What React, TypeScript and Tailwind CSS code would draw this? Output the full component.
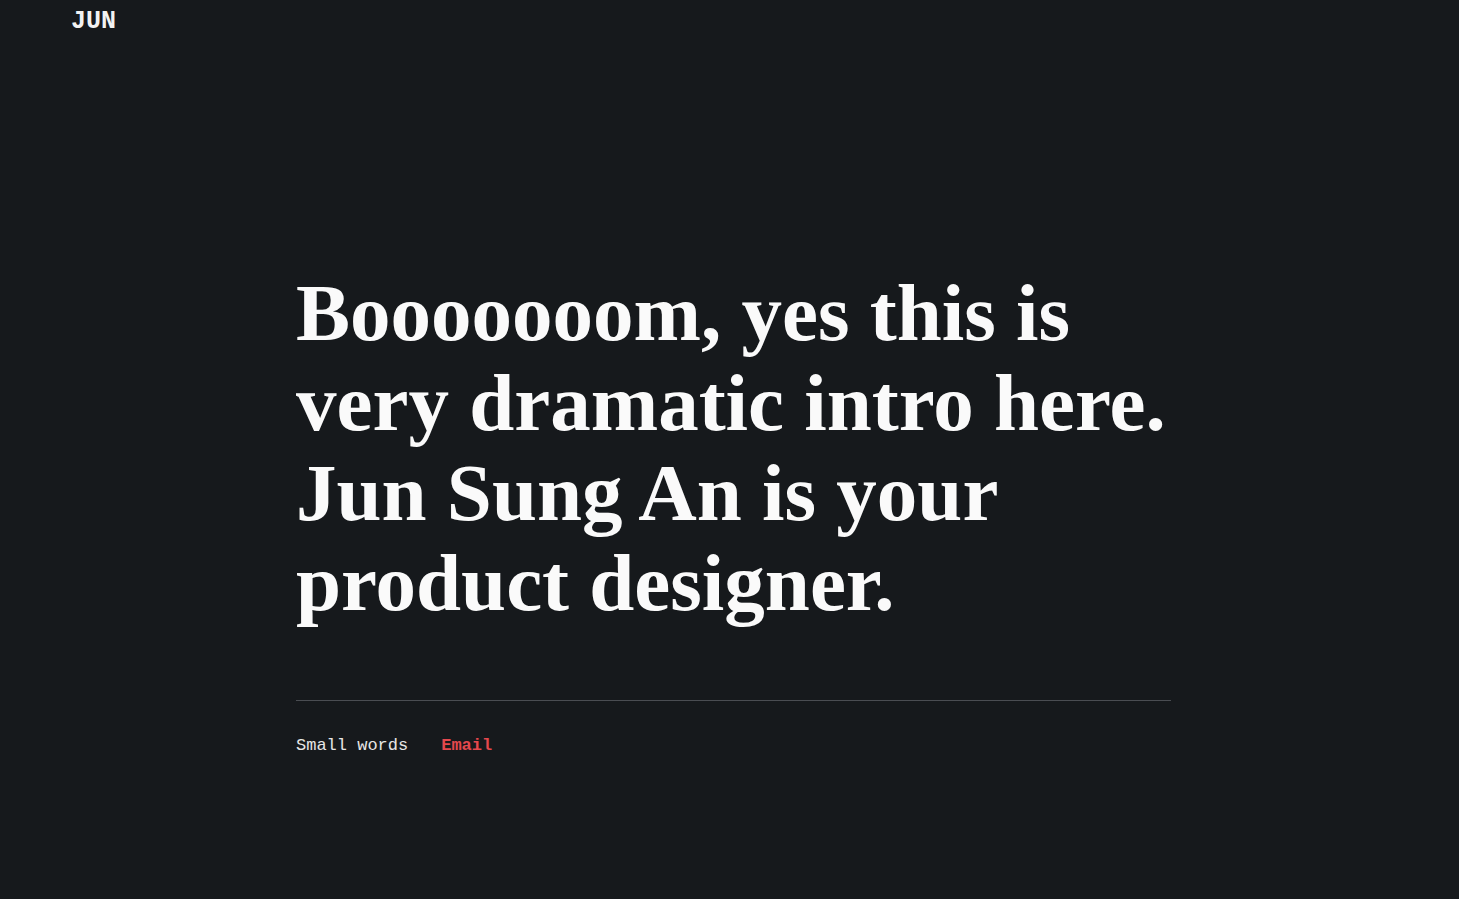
export default function App() {
  return (
    <div className="min-h-[899px] bg-[#16191c] text-white">
      <header className="px-[71px] pt-[3px]">
        <span className="font-['Liberation_Mono',monospace] text-[25px] font-bold text-[#f2f2f2]">
          JUN
        </span>
      </header>

      <main className="pl-[296px] pt-[227px]">
        <div className="w-[875px]">
          <h1 className="w-[890px] font-['Liberation_Serif',serif] text-[81px] font-bold leading-[90px] text-[#fafafa]">
            Booooooom, yes this is very dramatic intro here. Jun Sung An is your product designer.
          </h1>

          <div className="mt-[72px] border-t border-[#4a4d52]" />

          <div className="mt-[32px] flex items-baseline gap-[33px] font-['Liberation_Mono',monospace] text-[17px]">
            <span className="text-[#e6e6e6]">Small words</span>
            <a className="font-bold text-[#e5484d]">Email</a>
          </div>
        </div>
      </main>
    </div>
  );
}
